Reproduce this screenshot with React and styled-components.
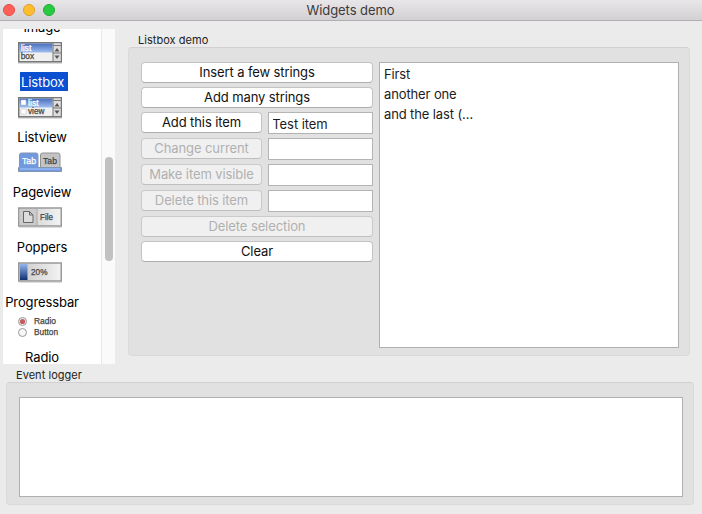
import React from "react";
import styled, { createGlobalStyle } from "styled-components";

const Global = createGlobalStyle`
  * { box-sizing: border-box; }
  body { margin: 0; overflow: hidden; background: #ebebeb; }
`;

const Window = styled.div`
  width: 702px;
  height: 514px;
  background: #ebebeb;
  color: #1c1c1c;
  font: 13px/20px Inter, "Liberation Sans", sans-serif;
  white-space: nowrap;
  overflow: hidden;
`;

const TitleBar = styled.header`
  height: 21px;
  display: grid;
  grid-template-columns: 60px 1fr 60px;
  align-items: center;
  padding: 0 4px 0 3px;
  background: linear-gradient(#e8e6e8, #d2d0d2);
  border-bottom: 1px solid #b1afb1;
`;

const Lights = styled.div`
  display: flex;
  gap: 8px;
`;

const Light = styled.span`
  width: 12px;
  height: 12px;
  border-radius: 50%;
  background: ${(p) => p.$fill};
  border: 1px solid ${(p) => p.$edge};
`;

const Title = styled.div`
  text-align: center;
  color: #3c3a3c;
  letter-spacing: -0.08px;
`;

const Upper = styled.main`
  display: flex;
  height: 343px;
  padding: 8px 12px 0 3px;
`;

const Sidebar = styled.nav`
  display: flex;
  width: 112px;
  height: 335px;
  overflow: hidden;
  background: #fff;
`;

const Items = styled.div`
  width: 98px;
  padding-left: 2px;
  margin-top: -43px;
`;

const Item = styled.div`
  width: 74px;
  height: 55px;
  display: flex;
  flex-direction: column;
  align-items: center;
  color: #000;
`;

const Picture = styled.svg`
  display: block;
  width: 46px;
  height: 24px;
  margin-left: -5px;
  flex: none;
  font-family: "Liberation Sans", sans-serif;
`;

const ItemLabel = styled.div`
  height: 19px;
  line-height: 20px;
  margin-top: 7px;
  letter-spacing: -0.12px;
  ${(p) => p.$selected && "width: 48px; padding-left: 1px; margin-left: 4px; background: #0a50d0; color: #fff;"}
`;

const Track = styled.div`
  width: 14px;
  padding: 128px 0 0 3px;
  background: #fafafa;
  border-left: 1px solid #e8e8e8;
`;

const Thumb = styled.div`
  width: 8px;
  height: 104px;
  border-radius: 4px;
  background: #c1c1c1;
`;

const Section = styled.section`
  margin-left: ${(p) => p.$left}px;
  width: ${(p) => p.$width}px;
`;

const Caption = styled.div`
  height: 18px;
  padding-left: 10px;
  font-size: 11px;
  line-height: 23px;
  letter-spacing: 0.04px;
  color: #222;
`;

const Group = styled.div`
  display: flex;
  gap: 6px;
  height: ${(p) => p.$height}px;
  padding: 14px 10px 0 12px;
  background: #e1e1e1;
  border: 1px solid #dadada;
  border-top-color: #d1d1d1;
  border-radius: 4px;
`;

const Controls = styled.div`
  display: flex;
  flex-direction: column;
  gap: 4px;
  width: 232px;
`;

const Row = styled.div`
  display: grid;
  grid-template-columns: 121px 105px;
  gap: 6px;
  height: 22px;
`;

const Button = styled.button`
  width: 100%;
  height: 21px;
  padding: 0;
  border: 1px solid #c3c3c3;
  border-bottom-color: #adadad;
  border-radius: 4px;
  background: #fff;
  color: #111;
  font: inherit;
  line-height: 19px;
  letter-spacing: -0.1px;
  &:disabled {
    background: #f0f0f0;
    border-color: #cacaca;
    border-bottom-color: #bfbfbf;
    color: #b0b0b0;
  }
`;

const Field = styled.input`
  width: 105px;
  height: 22px;
  padding: 2px 4px 0;
  border: 1px solid #b4b4b4;
  border-radius: 0;
  outline: none;
  background: #fff;
  color: #1c1c1c;
  font: inherit;
  letter-spacing: -0.08px;
  text-indent: -0.7px;
`;

const List = styled.div`
  width: 300px;
  height: 286px;
  padding: 1px 4px;
  border: 1px solid #b0b0b0;
  background: #fff;
`;

const Option = styled.div`
  height: 20px;
  letter-spacing: -0.12px;
`;

const Log = styled.div`
  width: 664px;
  height: 100px;
  border: 1px solid #b0b0b0;
  background: #fff;
`;

const Defs = () => (
  <defs>
    <linearGradient id="blue" x2="0" y2="1">
      <stop stopColor="#4a70bd" />
      <stop offset="1" stopColor="#9ebdf2" />
    </linearGradient>
    <linearGradient id="navy" x2="0" y2="1">
      <stop stopColor="#93b5ef" />
      <stop offset="1" stopColor="#122f70" />
    </linearGradient>
    <linearGradient id="grey" x2="1" y2="0">
      <stop stopColor="#c9c9c9" />
      <stop offset="1" stopColor="#f3f3f3" />
    </linearGradient>
  </defs>
);

const Word = ({ x, y, width, light, children }) => (
  <text
    x={x}
    y={y}
    fontSize="8.5"
    textLength={width}
    lengthAdjust="spacingAndGlyphs"
    fill={light ? "#fff" : "#444"}
    stroke={light ? "#fff" : "#444"}
    strokeWidth=".25"
  >
    {children}
  </text>
);

const ListPicture = ({ checks }) => (
  <Picture viewBox="0 0 46 24">
    <Defs />
    <rect x="1" y="21" width="44" height="2" fill="#ddd" />
    <rect x="1.75" y="1.75" width="42.5" height="19" fill="#f0f0f0" stroke="#777" strokeWidth="1.5" />
    <rect x="2.5" y="2.5" width="33" height="9" fill="url(#blue)" />
    <rect x="36" y="2.5" width="7.5" height="17.5" fill="#ddd" />
    <path d="M36 2v18M36 4.5h8M36 12h8" stroke="#777" fill="none" />
    <path d="M37.5 10.5L40 7 42.5 10.5zM37.5 14.5h5L40 18z" fill="#555" />
    {checks && <path d="M4 4h5v5H4zM4 13h5v5H4z" fill="#fff" stroke="#bbb" strokeWidth=".5" />}
    <Word x={checks ? 11 : 3.7} y="9.8" width="10.8" light>list</Word>
    <Word x={checks ? 11 : 3.7} y="18.2" width={checks ? 16.4 : 13.5}>{checks ? "view" : "box"}</Word>
  </Picture>
);

const TabPicture = () => (
  <Picture viewBox="0 0 46 24">
    <path d="M23.5 17V4q0-2 2-2H41q2 0 2 2v13z" fill="#c4c4c4" stroke="#929292" />
    <path d="M1.5 20.5v-4h1V4q0-2 2-2H19q2 0 2 2v12.5h23.5v4z" fill="#7199df" stroke="#8495b4" />
    <path d="M3 18h40" stroke="#a8c8fa" />
    <Word x="5" y="12.6" width="14" light>Tab</Word>
    <Word x="26" y="12.6" width="14">Tab</Word>
  </Picture>
);

const FilePicture = () => (
  <Picture viewBox="0 0 46 24">
    <rect x="2" y="21" width="43" height="1" fill="#ddd" />
    <rect x="1.75" y="2" width="42.5" height="18" fill="url(#grey)" stroke="#999" strokeWidth="1.5" />
    <path d="M2.5 3H20v16H2.5z" fill="#ccc" />
    <path d="M20 3v16" stroke="#aaa" />
    <path d="M6.5 5.5h6l3.5 3.5v7.5H6.5zM12.5 5.5V9H16" fill="#ddd" stroke="#666" />
    <Word x="23" y="14.2" width="13">File</Word>
  </Picture>
);

const ProgressPicture = () => (
  <Picture viewBox="0 0 46 24">
    <rect x="2" y="21" width="43" height="1" fill="#ddd" />
    <rect x="1.75" y="2" width="42.5" height="18" fill="url(#grey)" stroke="#999" strokeWidth="1.5" />
    <rect x="3" y="3" width="7.5" height="16" fill="url(#navy)" />
    <Word x="14" y="14" width="16.5">20%</Word>
  </Picture>
);

const RadioPicture = () => (
  <Picture viewBox="0 0 46 24">
    <circle cx="5.5" cy="5.5" r="4" fill="#eee" stroke="#999" />
    <circle cx="5.5" cy="5.5" r="2.6" fill="#c65d5d" />
    <circle cx="5.5" cy="16.5" r="4" fill="#f7f7f7" stroke="#999" />
    <Word x="17" y="8.4" width="22">Radio</Word>
    <Word x="17" y="19.4" width="24">Button</Word>
  </Picture>
);

const widgets = [
  ["Image", Picture],
  ["Listbox", ListPicture],
  ["Listview", () => <ListPicture checks />],
  ["Pageview", TabPicture],
  ["Poppers", FilePicture],
  ["Progressbar", ProgressPicture],
  ["Radio", RadioPicture],
];

const actions = [
  ["Add this item", "Test item", false],
  ["Change current", "", true],
  ["Make item visible", "", true],
  ["Delete this item", "", true],
];

export default function App() {
  return (
    <>
      <Global />
      <Window>
        <TitleBar>
          <Lights>
            <Light $fill="#ff5f57" $edge="#e24b45" />
            <Light $fill="#ffbd2e" $edge="#e0a028" />
            <Light $fill="#28ca42" $edge="#1fad32" />
          </Lights>
          <Title>Widgets demo</Title>
        </TitleBar>
        <Upper>
          <Sidebar>
            <Items>
              {widgets.map(([name, Art]) => (
                <Item key={name}>
                  <Art />
                  <ItemLabel $selected={name === "Listbox"}>{name}</ItemLabel>
                </Item>
              ))}
            </Items>
            <Track>
              <Thumb />
            </Track>
          </Sidebar>
          <Section $left={13} $width={562}>
            <Caption>Listbox demo</Caption>
            <Group $height={309}>
              <Controls>
                <Button>Insert a few strings</Button>
                <Button>Add many strings</Button>
                {actions.map(([label, value, off]) => (
                  <Row key={label}>
                    <Button disabled={off}>{label}</Button>
                    <Field defaultValue={value} />
                  </Row>
                ))}
                <Button disabled>Delete selection</Button>
                <Button>Clear</Button>
              </Controls>
              <List>
                <Option>First</Option>
                <Option>another one</Option>
                <Option>and the last (…</Option>
              </List>
            </Group>
          </Section>
        </Upper>
        <Section $left={6} $width={688}>
          <Caption>Event logger</Caption>
          <Group $height={123}>
            <Log />
          </Group>
        </Section>
      </Window>
    </>
  );
}
